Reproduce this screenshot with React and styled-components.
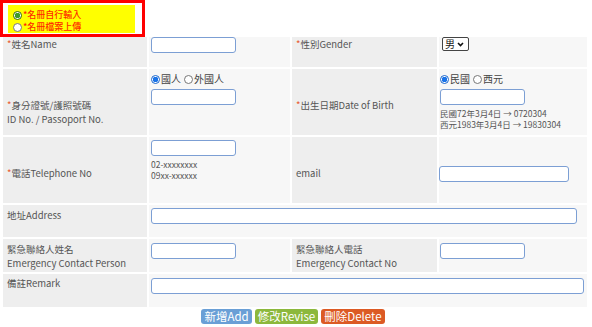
import React from "react";
import styled, { createGlobalStyle } from "styled-components";

const GlobalStyle = createGlobalStyle`
  body {
    margin: 0;
    background: #ffffff;
    font-family: "Noto Sans CJK TC", "Noto Sans", sans-serif;
    color: #555555;
  }
`;

const Page = styled.div`
  width: 592px;
  height: 327px;
  overflow: hidden;
`;

const ModeBox = styled.div`
  width: 145px;
  height: 37px;
  box-sizing: border-box;
  border: 3px solid #ff0000;
  padding: 2px 5px 1px 5px;
`;

const ModeHighlight = styled.div`
  background: #ffff00;
  height: 100%;
  width: 127px;
  padding: 4px 0 0 5px;
  box-sizing: border-box;
`;

const ModeOption = styled.div`
  display: flex;
  align-items: center;
  height: 12px;
  font-size: 9px;
  line-height: 12px;
  color: #ff2a00;
  font-weight: 500;
`;

const Radio = styled.span`
  display: inline-block;
  width: 9px;
  height: 9px;
  box-sizing: border-box;
  border-radius: 50%;
  flex-shrink: 0;
  border: 1px solid ${(p) => (p.$checked ? p.$ring : "#777777")};
  background: ${(p) =>
    p.$checked
      ? `radial-gradient(circle, ${p.$fill} 0 2.6px, #ffffff 3px)`
      : "#ffffff"};
  margin-right: 1px;
`;

const Form = styled.div`
  display: grid;
  grid-template-columns: 144px 141px 145px 148px;
  grid-template-rows: 30px 66px 66px 32px 33px 33px;
  gap: 2px;
  margin-left: 3px;
`;

const Label = styled.div`
  background: #eeeeee;
  font-size: 9.5px;
  line-height: 13.5px;
  padding: ${(p) => p.$pt || 3}px 0 0 ${(p) => p.$pl || 4}px;
  box-sizing: border-box;
  color: #555555;
`;

const Req = styled.span`
  color: #e8562a;
`;

const Value = styled.div`
  background: #f7f7f7;
  padding: ${(p) => p.$pt || 0}px 0 0 ${(p) => (p.$pl === undefined ? 2 : p.$pl)}px;
  box-sizing: border-box;
  grid-column: ${(p) => p.$span || "auto"};
`;

const TextInput = styled.div`
  width: ${(p) => p.$w || 85}px;
  height: 16px;
  box-sizing: border-box;
  border: 1px solid #7c9fd4;
  border-radius: 3px;
  background: #ffffff;
`;

const RadioRow = styled.div`
  display: flex;
  align-items: center;
  font-size: 10px;
  line-height: 12px;
  height: 12px;
  margin-bottom: 4px;
  color: #444444;
`;

const RadioItem = styled.span`
  display: inline-flex;
  align-items: center;
  margin-right: 3px;
`;

const Hint = styled.div`
  font-size: 8.5px;
  line-height: 11px;
  color: #555555;
  margin-top: ${(p) => p.$mt || 0}px;
`;

const Select = styled.div`
  display: flex;
  align-items: center;
  gap: 2px;
  height: 14px;
  width: 27px;
  box-sizing: border-box;
  border: 1px solid #444444;
  border-radius: 2px;
  background: #ffffff;
  margin-left: 3px;
  font-size: 10px;
  line-height: 12px;
  color: #222222;
  padding-left: 2px;
`;

const Actions = styled.div`
  display: flex;
  justify-content: center;
  gap: 3px;
  margin-top: 2px;
  padding-right: 6px;
`;

const Button = styled.div`
  height: 15px;
  line-height: 15px;
  padding: 0 3px;
  border-radius: 3px;
  background: ${(p) => p.$bg};
  color: #ffffff;
  font-size: 11.5px;
`;

const Chevron = () => (
  <svg width="7" height="5" viewBox="0 0 7 5">
    <path d="M1 1 L3.5 3.5 L6 1" fill="none" stroke="#111" strokeWidth="1.6" />
  </svg>
);

const Choice = ({ checked, children }) => (
  <RadioItem>
    <Radio $checked={checked} $ring="#1a66cc" $fill="#1a73e8" />
    {children}
  </RadioItem>
);

export default function App() {
  return (
    <Page>
      <GlobalStyle />
      <ModeBox>
        <ModeHighlight>
          <ModeOption>
            <Radio $checked $ring="#2f6b1c" $fill="#3f9a2a" />
            *名冊自行輸入
          </ModeOption>
          <ModeOption>
            <Radio />
            *名冊檔案上傳
          </ModeOption>
        </ModeHighlight>
      </ModeBox>

      <Form>
        <Label $pt={1}>
          <Req>*</Req>姓名Name
        </Label>
        <Value>
          <TextInput />
        </Value>
        <Label $pt={1}>
          <Req>*</Req>性別Gender
        </Label>
        <Value $pl={0}>
          <Select>
            男<Chevron />
          </Select>
        </Value>

        <Label $pt={30}>
          <Req>*</Req>身分證號/護照號碼
          <br />
          ID No. / Passoport No.
        </Label>
        <Value $pt={4}>
          <RadioRow>
            <Choice checked>國人</Choice>
            <Choice>外國人</Choice>
          </RadioRow>
          <TextInput />
        </Value>
        <Label $pt={30}>
          <Req>*</Req>出生日期Date of Birth
        </Label>
        <Value $pt={4} $pl={1}>
          <RadioRow>
            <Choice checked>民國</Choice>
            <Choice>西元</Choice>
          </RadioRow>
          <TextInput />
          <Hint $mt={3}>民國72年3月4日 → 0720304</Hint>
          <Hint>西元1983年3月4日 → 19830304</Hint>
        </Value>

        <Label $pt={30}>
          <Req>*</Req>電話Telephone No
        </Label>
        <Value $pt={3}>
          <TextInput />
          <Hint $mt={3}>02-xxxxxxxx</Hint>
          <Hint>09xx-xxxxxx</Hint>
        </Value>
        <Label $pt={30}>email</Label>
        <Value $pt={29} $pl={0}>
          <TextInput $w={130} />
        </Value>

        <Label $pt={4}>地址Address</Label>
        <Value $pt={3} $span="span 3">
          <TextInput $w={426} />
        </Value>

        <Label $pt={4}>
          緊急聯絡人姓名
          <br />
          Emergency Contact Person
        </Label>
        <Value $pt={4}>
          <TextInput />
        </Value>
        <Label $pt={4}>
          緊急聯絡人電話
          <br />
          Emergency Contact No
        </Label>
        <Value $pt={4} $pl={1}>
          <TextInput />
        </Value>

        <Label $pt={3}>備註Remark</Label>
        <Value $pt={4} $span="span 3">
          <TextInput $w={433} />
        </Value>
      </Form>

      <Actions>
        <Button $bg="#6a9fd6">新增Add</Button>
        <Button $bg="#8cb83c">修改Revise</Button>
        <Button $bg="#dc5a24">刪除Delete</Button>
      </Actions>
    </Page>
  );
}
